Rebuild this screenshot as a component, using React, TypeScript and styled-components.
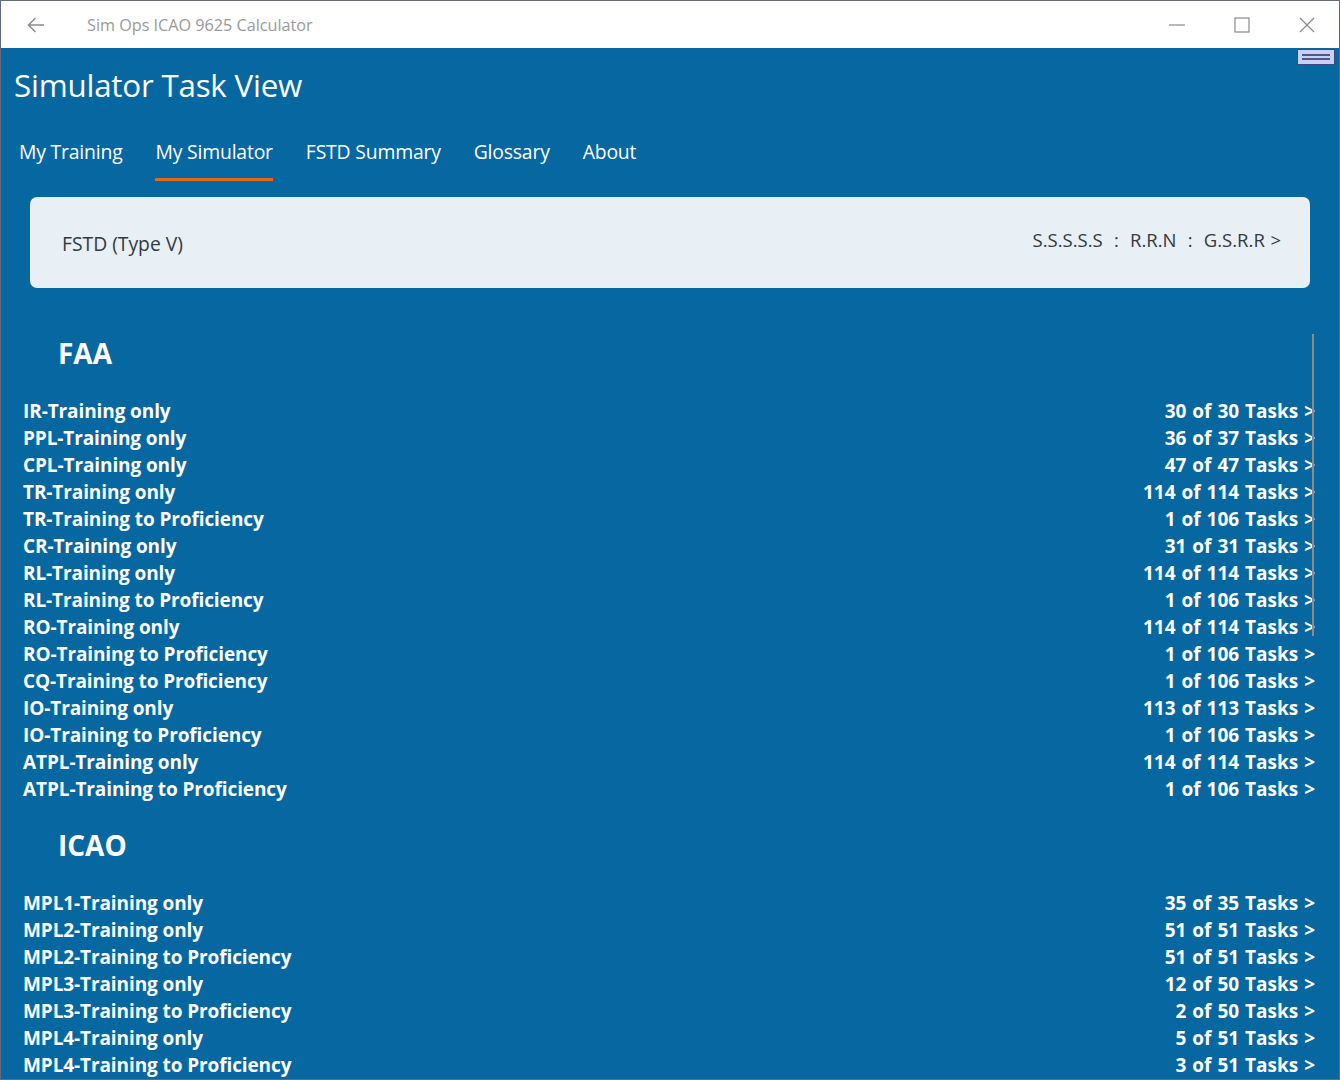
import React from 'react';
import styled, { createGlobalStyle } from 'styled-components';

const BLUE = '#0767a0';
const FONT = "'Open Sans', 'Noto Sans', 'Liberation Sans', sans-serif";

const GlobalStyle = createGlobalStyle`
  html, body {
    margin: 0;
    padding: 0;
    background: ${BLUE};
  }
  * {
    box-sizing: border-box;
  }
`;

const Window = styled.div`
  width: 1340px;
  height: 1080px;
  display: flex;
  flex-direction: column;
  border: 1px solid #5f6b80;
  overflow: hidden;
  font-family: ${FONT};
`;

const TitleBar = styled.div`
  height: 47px;
  flex: none;
  background: #ffffff;
  display: flex;
  align-items: center;
`;

const BackButton = styled.div`
  width: 70px;
  height: 47px;
  display: flex;
  align-items: center;
  justify-content: center;
  color: #8a8a8a;
`;

const AppTitle = styled.div`
  margin-left: 16px;
  font-size: 16.2px;
  color: #9a9a9a;
  flex: 1;
`;

const Controls = styled.div`
  display: flex;
  height: 47px;
`;

const ControlButton = styled.div`
  width: 65px;
  height: 47px;
  display: flex;
  align-items: center;
  justify-content: center;
  color: #8a8a8a;
`;

const Main = styled.div`
  flex: 1;
  position: relative;
  background: ${BLUE};
  color: #ffffff;
  overflow: hidden;
`;

const PageTitle = styled.h1`
  margin: 17px 0 0 13px;
  font-size: 31.3px;
  line-height: 40px;
  font-weight: 400;
  letter-spacing: -0.2px;
`;

const Tabs = styled.nav`
  display: flex;
  gap: 33px;
  margin: 33px 0 0 18px;
`;

const Tab = styled.div<{ $active?: boolean }>`
  font-size: 19.4px;
  line-height: 28px;
  padding-bottom: 12px;
  border-bottom: 3px solid ${(p) => (p.$active ? '#e5671d' : 'transparent')};
  letter-spacing: -0.2px;
`;

const InfoCard = styled.div`
  margin: 16px 29px 0 29px;
  height: 91px;
  border-radius: 7px;
  background: #e8eff5;
  color: #333a40;
  display: flex;
  align-items: center;
  justify-content: space-between;
  padding: 0 29px 0 32px;
  font-size: 18.5px;
`;

const CardLeft = styled.div`
  margin-top: 2px;
  font-size: 19.3px;
`;

const CardRight = styled.div`
  margin-top: -7px;
  word-spacing: 0.8px;
`;

const Section = styled.section`
  margin-top: 47px;
  & + & {
    margin-top: 24px;
  }
`;

const SectionTitle = styled.h2`
  margin: 0 0 27px 57px;
  font-size: 28px;
  line-height: 36px;
  font-weight: 700;
`;

const Row = styled.div`
  display: flex;
  justify-content: space-between;
  height: 27px;
  line-height: 27px;
  padding: 0 24px 0 22px;
  font-size: 19px;
  font-weight: 700;
  letter-spacing: -0.1px;
`;

const Count = styled.span`
  letter-spacing: 0;
  word-spacing: 1px;
`;

const Scrollbar = styled.div`
  position: absolute;
  right: 25px;
  top: 286px;
  width: 2px;
  height: 302px;
  background: #8c8c8c;
`;

const CornerButton = styled.div`
  position: absolute;
  right: 4px;
  top: 1px;
  width: 38px;
  height: 16px;
  background: #c9d0f0;
  border: 1px solid #3b4a78;
  display: flex;
  flex-direction: column;
  justify-content: center;
  gap: 2px;
  padding: 0 4px;
`;

const CornerLine = styled.div`
  height: 2px;
  background: #4b5890;
`;

type Item = { name: string; done: number; total: number };

const faa: Item[] = [
  { name: 'IR-Training only', done: 30, total: 30 },
  { name: 'PPL-Training only', done: 36, total: 37 },
  { name: 'CPL-Training only', done: 47, total: 47 },
  { name: 'TR-Training only', done: 114, total: 114 },
  { name: 'TR-Training to Proficiency', done: 1, total: 106 },
  { name: 'CR-Training only', done: 31, total: 31 },
  { name: 'RL-Training only', done: 114, total: 114 },
  { name: 'RL-Training to Proficiency', done: 1, total: 106 },
  { name: 'RO-Training only', done: 114, total: 114 },
  { name: 'RO-Training to Proficiency', done: 1, total: 106 },
  { name: 'CQ-Training to Proficiency', done: 1, total: 106 },
  { name: 'IO-Training only', done: 113, total: 113 },
  { name: 'IO-Training to Proficiency', done: 1, total: 106 },
  { name: 'ATPL-Training only', done: 114, total: 114 },
  { name: 'ATPL-Training to Proficiency', done: 1, total: 106 },
];

const icao: Item[] = [
  { name: 'MPL1-Training only', done: 35, total: 35 },
  { name: 'MPL2-Training only', done: 51, total: 51 },
  { name: 'MPL2-Training to Proficiency', done: 51, total: 51 },
  { name: 'MPL3-Training only', done: 12, total: 50 },
  { name: 'MPL3-Training to Proficiency', done: 2, total: 50 },
  { name: 'MPL4-Training only', done: 5, total: 51 },
  { name: 'MPL4-Training to Proficiency', done: 3, total: 51 },
];

const tabs = ['My Training', 'My Simulator', 'FSTD Summary', 'Glossary', 'About'];

function TaskSection({ title, items }: { title: string; items: Item[] }) {
  return (
    <Section>
      <SectionTitle>{title}</SectionTitle>
      {items.map((it) => (
        <Row key={it.name}>
          <span>{it.name}</span>
          <Count>
            {it.done} of {it.total} Tasks &gt;
          </Count>
        </Row>
      ))}
    </Section>
  );
}

export default function App() {
  return (
    <>
      <GlobalStyle />
      <Window>
        <TitleBar>
          <BackButton>
            <svg width="18" height="16" viewBox="0 0 18 16" fill="none" stroke="currentColor" strokeWidth="1.4">
              <path d="M17 8H1.5M8.5 1L1.5 8l7 7" />
            </svg>
          </BackButton>
          <AppTitle>Sim Ops ICAO 9625 Calculator</AppTitle>
          <Controls>
            <ControlButton>
              <svg width="16" height="16" viewBox="0 0 16 16" stroke="currentColor" strokeWidth="1.2">
                <path d="M0 8h16" />
              </svg>
            </ControlButton>
            <ControlButton>
              <svg width="16" height="16" viewBox="0 0 16 16" fill="none" stroke="currentColor" strokeWidth="1.2">
                <rect x="1" y="1" width="14" height="14" />
              </svg>
            </ControlButton>
            <ControlButton>
              <svg width="16" height="16" viewBox="0 0 16 16" stroke="currentColor" strokeWidth="1.2">
                <path d="M1 1l14 14M15 1L1 15" />
              </svg>
            </ControlButton>
          </Controls>
        </TitleBar>
        <Main>
          <CornerButton>
            <CornerLine />
            <CornerLine />
          </CornerButton>
          <PageTitle>Simulator Task View</PageTitle>
          <Tabs>
            {tabs.map((t) => (
              <Tab key={t} $active={t === 'My Simulator'}>
                {t}
              </Tab>
            ))}
          </Tabs>
          <InfoCard>
            <CardLeft>FSTD (Type V)</CardLeft>
            <CardRight>S.S.S.S.S&nbsp; :&nbsp; R.R.N&nbsp; :&nbsp; G.S.R.R &gt;</CardRight>
          </InfoCard>
          <TaskSection title="FAA" items={faa} />
          <TaskSection title="ICAO" items={icao} />
          <Scrollbar />
        </Main>
      </Window>
    </>
  );
}
